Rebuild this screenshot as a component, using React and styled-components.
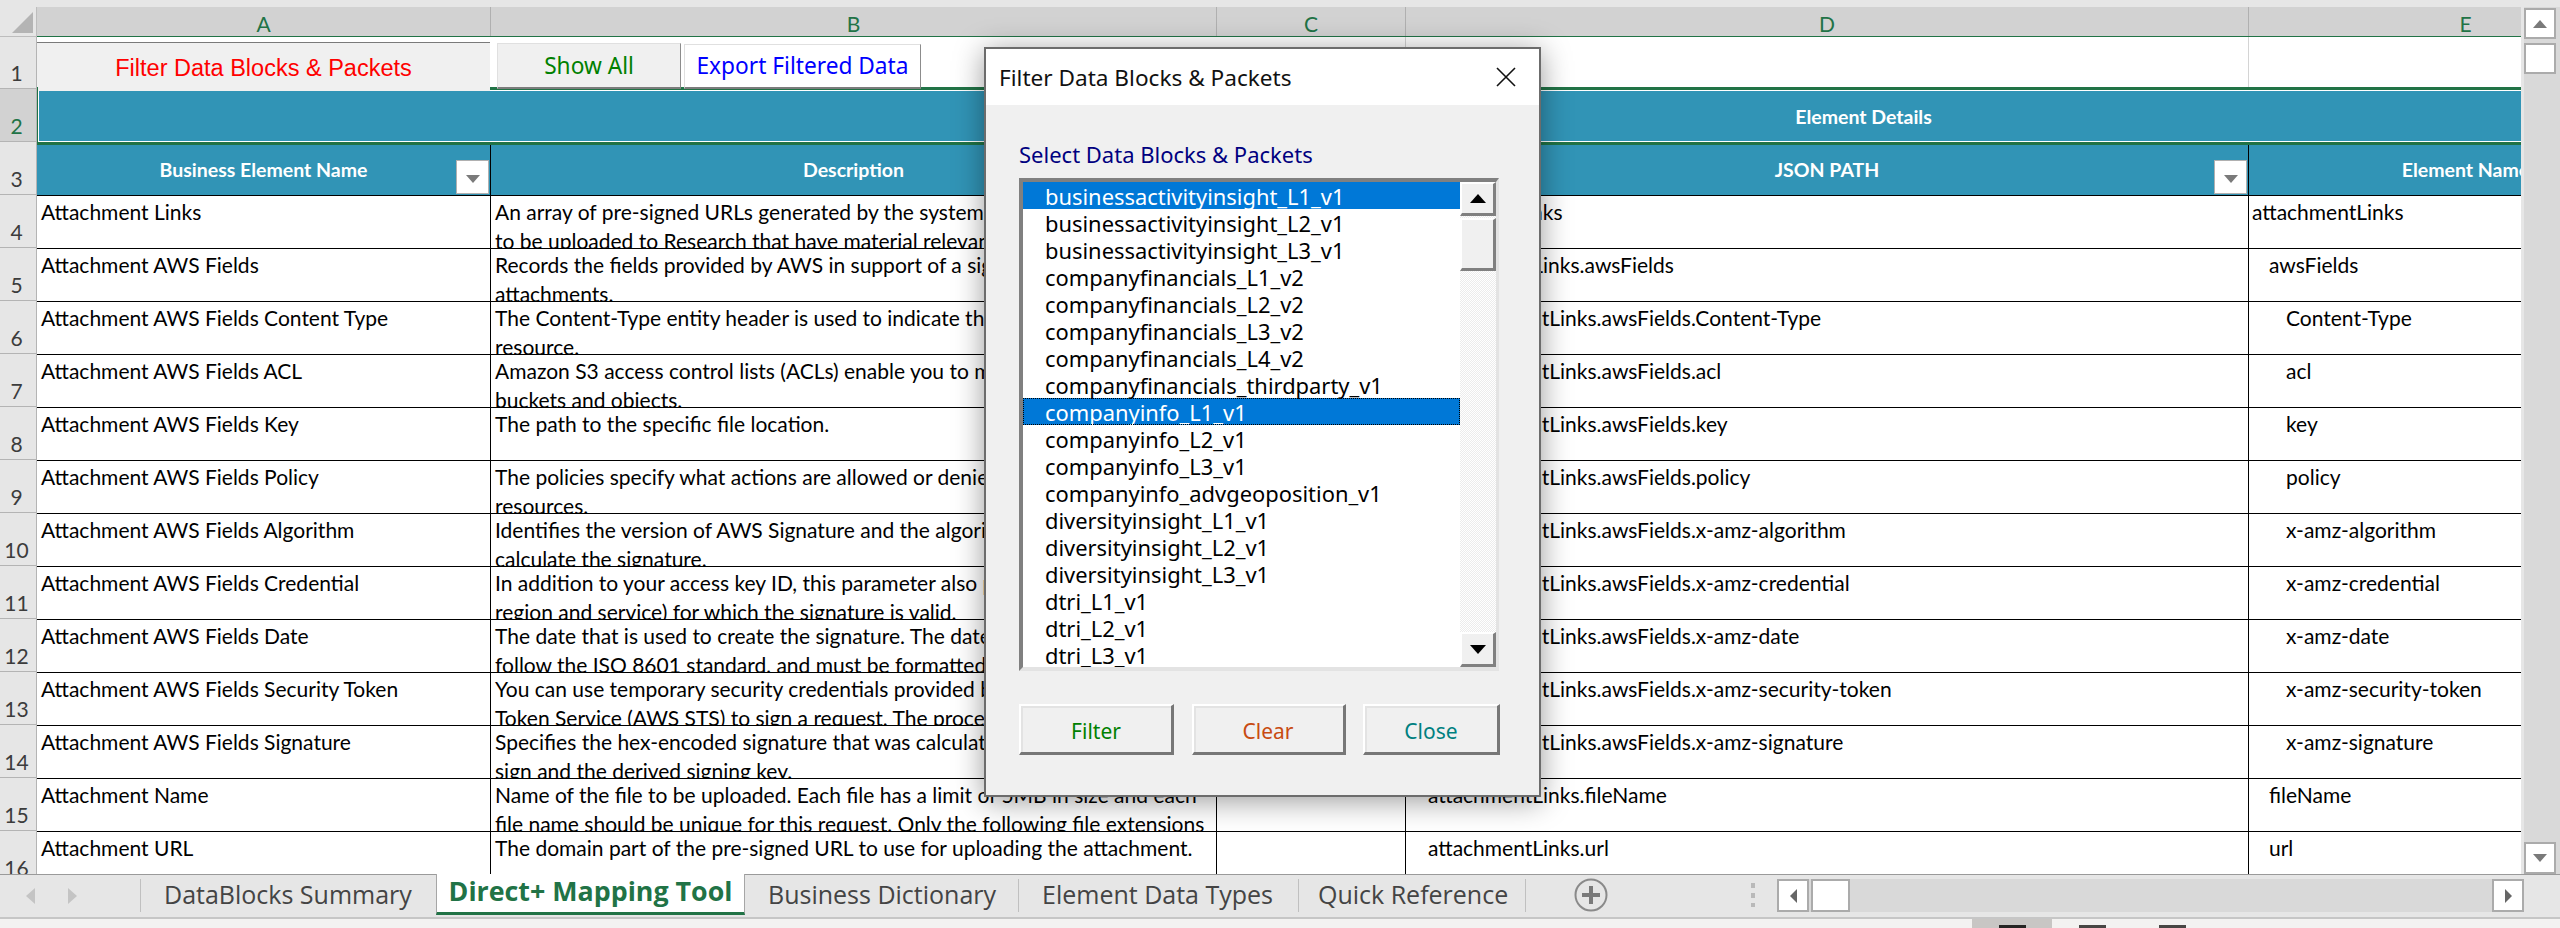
import React from "react";
import styled, { createGlobalStyle } from "styled-components";

const COLS = "454px 726px 189px 843px 434px";
const GREEN = "#217346";
const TEAL = "#3194b6";

const Global = createGlobalStyle`
  html, body { margin: 0; padding: 0; background: #e6e6e6; overflow: hidden; }
  * { box-sizing: border-box; }
`;

const Page = styled.div`
  position: relative;
  width: 2560px;
  height: 928px;
  overflow: hidden;
  display: flex;
  flex-direction: column;
  background: #e6e6e6;
  font-family: Lato, "Liberation Sans", sans-serif;
`;
const Workspace = styled.div`
  display: flex;
  height: 874px;
  padding-top: 7px;
`;
const RowHeaders = styled.div`
  width: 37px;
  flex: none;
  overflow: hidden;
`;
const Corner = styled.div`
  height: 30px;
  padding: 5px 3px 0 12px;
  border-right: 1px solid #bdbdbd;
  border-bottom: 1px solid #bdbdbd;
  svg { display: block; }
`;
const RowNumber = styled.div`
  height: ${(p) => p.$h}px;
  display: flex;
  align-items: flex-end;
  justify-content: center;
  padding: 0 3px 3px 0;
  font-size: 21px;
  line-height: 24px;
  color: ${(p) => (p.$active ? GREEN : "#3c3c3c")};
  background: ${(p) => (p.$active ? "#d2d2d2" : "#e6e6e6")};
  border-right: 1px solid #b4b4b4;
  border-bottom: 1px solid #b4b4b4;
`;
const Cells = styled.div`
  width: 2484px;
  flex: none;
  overflow: hidden;
  background: #fff;
`;
const ColumnLetters = styled.div`
  display: grid;
  grid-template-columns: ${COLS};
  height: 30px;
  border-bottom: 3px solid ${GREEN};
`;
const ColumnLetter = styled.div`
  display: flex;
  align-items: center;
  justify-content: center;
  padding-top: 4px;
  background: #d2d2d2;
  border-right: 1px solid #b0b0b0;
  color: ${GREEN};
  font-size: 21px;
`;
const ButtonRow = styled.div`
  display: grid;
  grid-template-columns: ${COLS};
  height: 54px;
  background: linear-gradient(#fff 0 50px, ${GREEN} 50px 53px, #fff 53px);
`;
const EmptyCell = styled.div`
  height: 50px;
  border-right: 1px solid #d4d4d4;
`;
const ButtonCell = styled.div`
  display: flex;
  align-items: flex-start;
  padding-left: ${(p) => p.$pad || 0}px;
  gap: 3px;
`;
const FilterMacroButton = styled.div`
  width: 453px;
  height: 52px;
  margin-top: 5px;
  display: flex;
  align-items: center;
  justify-content: center;
  background: #f0f0f0;
  border-top: 1px solid #7a7a7a;
  font: 23.5px/1 "Liberation Sans", Arial, sans-serif;
  color: #ff0000;
`;
const MacroButton = styled.div`
  width: ${(p) => p.$w}px;
  height: ${(p) => p.$h}px;
  margin-top: ${(p) => 52 - p.$h}px;
  padding-top: 1px;
  display: flex;
  align-items: center;
  justify-content: center;
  background: ${(p) => p.$bg};
  border: 1px solid #e0e0e0;
  border-bottom: 2px solid #7c7c7c;
  border-right: 1px solid #8c8c8c;
  font: 22.7px/1 "Noto Sans", sans-serif;
  color: ${(p) => p.$color};
`;
const MergedRow = styled.div`
  position: relative;
  height: 54px;
  margin-left: 1px;
  padding: 0 0 0 1168px;
  display: flex;
  align-items: center;
  justify-content: center;
  background: ${TEAL};
  border-bottom: 3px solid ${GREEN};
  box-shadow: inset 1px 0 0 #fff, inset 0 -1px 0 #fff;
  color: #fff;
  font-weight: 700;
  font-size: 19.5px;
  &::before {
    content: "";
    position: absolute;
    left: -3px;
    top: -4px;
    bottom: -3px;
    width: 3px;
    background: ${GREEN};
  }
`;
const HeaderRow = styled.div`
  display: grid;
  grid-template-columns: ${COLS};
  height: 51px;
  background: ${TEAL};
  border-bottom: 1px solid #000;
`;
const HeaderCell = styled.div`
  position: relative;
  display: flex;
  align-items: center;
  justify-content: center;
  padding-bottom: 2px;
  border-right: 1px solid #000;
  color: #fff;
  font-weight: 700;
  font-size: 19.5px;
  white-space: nowrap;
`;
const FilterDrop = styled.div`
  position: absolute;
  right: 1px;
  bottom: 1px;
  width: 33px;
  height: 34px;
  display: flex;
  align-items: center;
  justify-content: center;
  padding-top: 3px;
  background: #fff;
  border: 1px solid #b0b0b0;
`;
const DataRow = styled.div`
  display: grid;
  grid-template-columns: ${COLS};
  height: 53px;
  border-bottom: 1px solid #000;
`;
const Cell = styled.div`
  overflow: hidden;
  padding: 1px 0 0 ${(p) => p.$pad}px;
  border-right: 1px solid #000;
  font-size: 21px;
  line-height: 29px;
  color: #000;
  white-space: nowrap;
`;
const CellLine = styled.div`
  height: 29px;
`;
const VScroll = styled.div`
  width: 39px;
  flex: none;
  display: flex;
  flex-direction: column;
  align-items: flex-end;
  padding: 1px 4px 0 0;
  margin-top: 0;
  background: #d9d9d9;
  border-left: 3px solid #e6e6e6;
`;
const ScrollPiece = styled.div`
  width: 32px;
  height: ${(p) => p.$h}px;
  margin-top: ${(p) => p.$mt || 0}px;
  display: flex;
  align-items: center;
  justify-content: center;
  background: #fff;
  border: 2px solid #ababab;
`;
const TabStrip = styled.div`
  display: flex;
  align-items: stretch;
  height: 43px;
  background: #e6e6e6;
  border-top: 1px solid #9a9a9a;
`;
const TabNav = styled.div`
  width: 141px;
  flex: none;
  display: flex;
  align-items: center;
  gap: 33px;
  padding-left: 26px;
  margin: 4px 0 5px;
  border-right: 1px solid #c0c0c0;
`;
const Tab = styled.div`
  flex: none;
  width: ${(p) => p.$w}px;
  display: flex;
  align-items: center;
  justify-content: ${(p) => (p.$active ? "center" : "flex-start")};
  padding: 0 0 3px ${(p) => (p.$active ? 0 : p.$pad || 23)}px;
  font: ${(p) => (p.$active ? 700 : 400)} ${(p) => (p.$active ? 26.8 : 25)}px/1 "Open Sans", sans-serif;
  color: ${(p) => (p.$active ? GREEN : "#444")};
  white-space: nowrap;
  background: ${(p) => (p.$active ? "#fff" : "transparent")};
  ${(p) =>
    p.$active
      ? `border-left: 1px solid #a6a6a6; border-right: 1px solid #a6a6a6; border-bottom: 3px solid ${GREEN}; margin-bottom: 2px; margin-top: -1px;`
      : ""}
`;
const TabDivider = styled.div`
  width: 1px;
  flex: none;
  margin: 4px 0 5px;
  background: #c0c0c0;
`;
const AddTab = styled.div`
  flex: none;
  width: 225px;
  padding-left: 48px;
  display: flex;
  align-items: center;
  svg { display: block; margin-bottom: 3px; }
`;
const Grip = styled.div`
  width: 4px;
  height: 24px;
  flex: none;
  margin: 8px 22px 0 0;
  background: repeating-linear-gradient(#b9b9b9 0 5px, transparent 5px 10px);
`;
const HScroll = styled.div`
  width: 747px;
  height: 33px;
  margin-top: 4px;
  flex: none;
  display: flex;
  background: #d9d9d9;
`;
const HPiece = styled.div`
  width: ${(p) => p.$w}px;
  margin: ${(p) => p.$m || 0};
  display: flex;
  align-items: center;
  justify-content: center;
  background: #fff;
  border: 2px solid #ababab;
`;
const StatusBar = styled.div`
  flex: 1;
  display: flex;
  background: #f3f2f1;
  border-top: 2px solid #c6c6c6;
  padding-left: 1972px;
`;
const ViewButton = styled.div`
  width: ${(p) => p.$w}px;
  display: flex;
  justify-content: center;
  align-items: flex-end;
  background: ${(p) => (p.$active ? "#c8c6c4" : "transparent")};
`;
const ViewBar = styled.div`
  width: 27px;
  height: 3px;
  background: ${(p) => (p.$active ? "#252423" : "#484644")};
`;

const Dialog = styled.div`
  position: absolute;
  left: 984px;
  top: 47px;
  width: 557px;
  height: 750px;
  display: flex;
  flex-direction: column;
  background: #f0f0f0;
  border: 2px solid #6c6c6c;
  box-shadow: 0 4px 28px rgba(0, 0, 0, 0.4);
  font-family: "Noto Sans", sans-serif;
`;
const DialogTitleBar = styled.div`
  height: 56px;
  flex: none;
  display: flex;
  align-items: center;
  justify-content: space-between;
  padding: 0 23px 0 13px;
  background: #fff;
  font-size: 22.6px;
  color: #111;
  svg { display: block; }
`;
const DialogBody = styled.div`
  padding: 34px 40px 0 33px;
`;
const ListLabel = styled.div`
  height: 30px;
  font-size: 22px;
  line-height: 30px;
  color: #000080;
`;
const ListBox = styled.div`
  display: flex;
  height: 493px;
  margin-top: 9px;
  background: #fff;
  border-top: 4px solid #808080;
  border-left: 4px solid #808080;
  border-right: 3px solid #e3e3e3;
  border-bottom: 4px solid #e3e3e3;
`;
const ListItems = styled.div`
  width: 437px;
  flex: none;
  overflow: hidden;
`;
const ListItem = styled.div`
  height: 27px;
  padding: 1px 0 0 22px;
  font-size: 21.9px;
  line-height: 27px;
  white-space: nowrap;
  color: ${(p) => (p.$selected ? "#fff" : "#000")};
  background: ${(p) => (p.$selected ? "#0078d7" : "#fff")};
  outline: ${(p) => (p.$focused ? "1px dotted #000" : "none")};
  outline-offset: -1px;
`;
const ListScroll = styled.div`
  flex: 1;
  display: flex;
  flex-direction: column;
  background: repeating-conic-gradient(#ececec 0 25%, #fff 0 50%) 0 0 / 2px 2px;
`;
const ListScrollPart = styled.div`
  height: ${(p) => p.$h}px;
  margin-top: ${(p) => p.$mt || 0}px;
  display: flex;
  align-items: center;
  justify-content: center;
  background: #f0f0f0;
  border-top: 2px solid #fff;
  border-left: 2px solid #fff;
  border-right: 3px solid #808080;
  border-bottom: 3px solid #808080;
`;
const DialogButtons = styled.div`
  display: flex;
  margin-top: 33px;
  margin-right: -1px;
  justify-content: space-between;
`;
const DialogButton = styled.div`
  width: ${(p) => p.$w}px;
  height: 51px;
  display: flex;
  align-items: center;
  justify-content: center;
  padding-top: 3px;
  background: #f0f0f0;
  border-top: 2px solid #fff;
  border-left: 2px solid #fff;
  border-right: 3px solid #777;
  border-bottom: 3px solid #777;
  box-shadow: inset 2px 2px 0 #e3e3e3;
  font-size: 21px;
  color: ${(p) => p.$color};
`;

const Arrow = ({ dir = "down", w = 14, h = 8, color = "#7a7a7a" }) => {
  const points = {
    up: `0,${h} ${w},${h} ${w / 2},0`,
    down: `0,0 ${w},0 ${w / 2},${h}`,
    left: `${w},0 ${w},${h} 0,${h / 2}`,
    right: `0,0 0,${h} ${w},${h / 2}`,
  }[dir];
  return (
    <svg width={w} height={h} viewBox={`0 0 ${w} ${h}`}>
      <polygon points={points} fill={color} />
    </svg>
  );
};

const rows = [
  ["Attachment Links", ["An array of pre-signed URLs generated by the system for each of the files", "to be uploaded to Research that have material relevance to the request."], "attachmentLinks", "attachmentLinks", 0],
  ["Attachment AWS Fields", ["Records the fields provided by AWS in support of a signed upload of the", "attachments."], "attachmentLinks.awsFields", "awsFields", 1],
  ["Attachment AWS Fields Content Type", ["The Content-Type entity header is used to indicate the media type of the", "resource."], "attachmentLinks.awsFields.Content-Type", "Content-Type", 2],
  ["Attachment AWS Fields ACL", ["Amazon S3 access control lists (ACLs) enable you to manage access to", "buckets and objects."], "attachmentLinks.awsFields.acl", "acl", 2],
  ["Attachment AWS Fields Key", ["The path to the specific file location."], "attachmentLinks.awsFields.key", "key", 2],
  ["Attachment AWS Fields Policy", ["The policies specify what actions are allowed or denied on the specified", "resources."], "attachmentLinks.awsFields.policy", "policy", 2],
  ["Attachment AWS Fields Algorithm", ["Identifies the version of AWS Signature and the algorithm that you used to", "calculate the signature."], "attachmentLinks.awsFields.x-amz-algorithm", "x-amz-algorithm", 2],
  ["Attachment AWS Fields Credential", ["In addition to your access key ID, this parameter also provides scope (AWS", "region and service) for which the signature is valid."], "attachmentLinks.awsFields.x-amz-credential", "x-amz-credential", 2],
  ["Attachment AWS Fields Date", ["The date that is used to create the signature. The date must be the same and", "follow the ISO 8601 standard, and must be formatted"], "attachmentLinks.awsFields.x-amz-date", "x-amz-date", 2],
  ["Attachment AWS Fields Security Token", ["You can use temporary security credentials provided by the AWS Security", "Token Service (AWS STS) to sign a request. The process is the same."], "attachmentLinks.awsFields.x-amz-security-token", "x-amz-security-token", 2],
  ["Attachment AWS Fields Signature", ["Specifies the hex-encoded signature that was calculated from the string to", "sign and the derived signing key."], "attachmentLinks.awsFields.x-amz-signature", "x-amz-signature", 2],
  ["Attachment Name", ["Name of the file to be uploaded. Each file has a limit of 5MB in size and each", "file name should be unique for this request. Only the following file extensions"], "attachmentLinks.fileName", "fileName", 1],
  ["Attachment URL", ["The domain part of the pre-signed URL to use for uploading the attachment."], "attachmentLinks.url", "url", 1],
];

const items = [
  "businessactivityinsight_L1_v1", "businessactivityinsight_L2_v1", "businessactivityinsight_L3_v1",
  "companyfinancials_L1_v2", "companyfinancials_L2_v2", "companyfinancials_L3_v2", "companyfinancials_L4_v2",
  "companyfinancials_thirdparty_v1", "companyinfo_L1_v1", "companyinfo_L2_v1", "companyinfo_L3_v1",
  "companyinfo_advgeoposition_v1", "diversityinsight_L1_v1", "diversityinsight_L2_v1", "diversityinsight_L3_v1",
  "dtri_L1_v1", "dtri_L2_v1", "dtri_L3_v1",
];

const rowHeights = [52, 53, 53];

export default function App() {
  return (
    <Page>
      <Global />
      <Workspace>
        <RowHeaders>
          <Corner>
            <svg width="21" height="21" viewBox="0 0 21 21">
              <polygon points="21,0 21,21 0,21" fill="#b4b4b4" />
            </svg>
          </Corner>
          {Array.from({ length: 13 + 3 }, (_, i) => (
            <RowNumber key={i} $h={rowHeights[i] || 53} $active={i === 1}>
              {i + 1}
            </RowNumber>
          ))}
        </RowHeaders>
        <Cells>
          <ColumnLetters>
            {["A", "B", "C", "D", "E"].map((l) => (
              <ColumnLetter key={l}>{l}</ColumnLetter>
            ))}
          </ColumnLetters>
          <ButtonRow>
            <ButtonCell>
              <FilterMacroButton>Filter Data Blocks &amp; Packets</FilterMacroButton>
            </ButtonCell>
            <ButtonCell $pad={6}>
              <MacroButton $w={184} $h={46} $bg="#f0f0f0" $color="#008000">Show All</MacroButton>
              <MacroButton $w={237} $h={45} $bg="#fff" $color="#0000ff">Export Filtered Data</MacroButton>
            </ButtonCell>
            <EmptyCell />
            <EmptyCell />
            <EmptyCell />
          </ButtonRow>
          <MergedRow>Element Details</MergedRow>
          <HeaderRow>
            <HeaderCell>
              Business Element Name
              <FilterDrop><Arrow /></FilterDrop>
            </HeaderCell>
            <HeaderCell>Description</HeaderCell>
            <HeaderCell />
            <HeaderCell>
              JSON PATH
              <FilterDrop><Arrow /></FilterDrop>
            </HeaderCell>
            <HeaderCell>Element Name</HeaderCell>
          </HeaderRow>
          {rows.map(([name, desc, path, el, level]) => (
            <DataRow key={path}>
              <Cell $pad={4}>{name}</Cell>
              <Cell $pad={4}>
                {desc.map((line) => (
                  <CellLine key={line}>{line}</CellLine>
                ))}
              </Cell>
              <Cell $pad={4} />
              <Cell $pad={5 + level * 17}>{path}</Cell>
              <Cell $pad={3 + level * 17}>{el}</Cell>
            </DataRow>
          ))}
        </Cells>
        <VScroll>
          <ScrollPiece $h={31}><Arrow dir="up" /></ScrollPiece>
          <ScrollPiece $h={31} $mt={4} />
          <ScrollPiece $h={32} $mt={768}><Arrow /></ScrollPiece>
        </VScroll>
      </Workspace>
      <TabStrip>
        <TabNav>
          <Arrow dir="left" w={9} h={16} color="#c4c4c4" />
          <Arrow dir="right" w={9} h={16} color="#c4c4c4" />
        </TabNav>
        <Tab $w={295}>DataBlocks Summary</Tab>
        <Tab $w={309} $active>Direct+ Mapping Tool</Tab>
        <Tab $w={273}>Business Dictionary</Tab>
        <TabDivider />
        <Tab $w={279}>Element Data Types</Tab>
        <TabDivider />
        <Tab $w={226} $pad={19}>Quick Reference</Tab>
        <TabDivider />
        <AddTab>
          <svg width="34" height="34" viewBox="0 0 34 34">
            <circle cx="17" cy="17" r="15.5" fill="none" stroke="#8a8a8a" strokeWidth="2" />
            <path d="M17 8v18M8 17h18" stroke="#7a7a7a" strokeWidth="4" />
          </svg>
        </AddTab>
        <Grip />
        <HScroll>
          <HPiece $w={32}><Arrow dir="left" w={7} h={14} color="#666" /></HPiece>
          <HPiece $w={39} $m="0 auto 0 2px" />
          <HPiece $w={32}><Arrow dir="right" w={7} h={14} color="#666" /></HPiece>
        </HScroll>
      </TabStrip>
      <StatusBar>
        <ViewButton $w={80} $active><ViewBar $active /></ViewButton>
        <ViewButton $w={80}><ViewBar /></ViewButton>
        <ViewButton $w={80}><ViewBar /></ViewButton>
      </StatusBar>
      <Dialog>
        <DialogTitleBar>
          Filter Data Blocks &amp; Packets
          <svg width="20" height="20" viewBox="0 0 20 20">
            <path d="M1 1l18 18M19 1L1 19" stroke="#111" strokeWidth="1.6" />
          </svg>
        </DialogTitleBar>
        <DialogBody>
          <ListLabel>Select Data Blocks &amp; Packets</ListLabel>
          <ListBox>
            <ListItems>
              {items.map((t, i) => (
                <ListItem key={t} $selected={i === 0 || i === 8} $focused={i === 8}>{t}</ListItem>
              ))}
            </ListItems>
            <ListScroll>
              <ListScrollPart $h={34}><Arrow dir="up" w={16} h={9} color="#000" /></ListScrollPart>
              <ListScrollPart $h={53} $mt={2} />
              <ListScrollPart $h={35} $mt={361}><Arrow w={16} h={9} color="#000" /></ListScrollPart>
            </ListScroll>
          </ListBox>
          <DialogButtons>
            <DialogButton $w={155} $color="#008000">Filter</DialogButton>
            <DialogButton $w={154} $color="#c84b11">Clear</DialogButton>
            <DialogButton $w={137} $color="#008080">Close</DialogButton>
          </DialogButtons>
        </DialogBody>
      </Dialog>
    </Page>
  );
}
